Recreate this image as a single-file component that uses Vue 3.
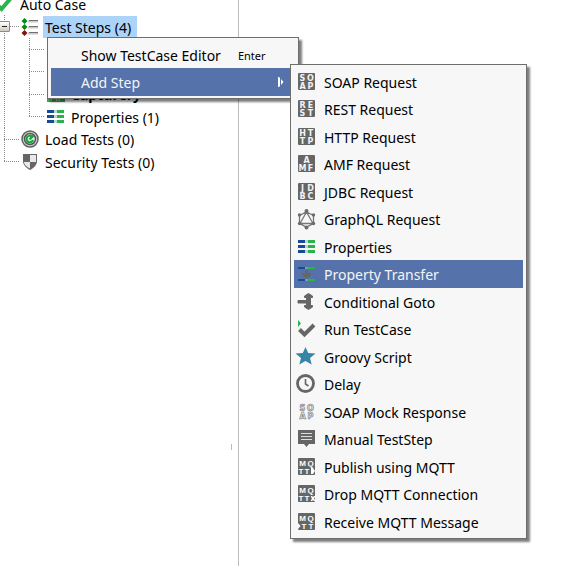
<script setup>
const tree = [
  { label: 'Auto Case', icon: 'check', level: 1, root: true },
  { label: 'Test Steps (4)', icon: 'steps', level: 1, selected: true, open: true },
  { level: 2 },
  { level: 2 },
  { label: 'Capturery', icon: 'run', level: 2, strong: true },
  { label: 'Properties (1)', icon: 'props', level: 2, last: true },
  { label: 'Load Tests (0)', icon: 'load', level: 1 },
  { label: 'Security Tests (0)', icon: 'shield', level: 1, last: true },
]

const steps = [
  { label: 'SOAP Request', tile: ['SO', 'AP'] },
  { label: 'REST Request', tile: ['RE', 'ST'] },
  { label: 'HTTP Request', tile: ['HT', 'TP'] },
  { label: 'AMF Request', tile: ['A', 'MF'] },
  { label: 'JDBC Request', tile: ['JD', 'BC'] },
  { label: 'GraphQL Request', icon: 'graph' },
  { label: 'Properties', icon: 'props' },
  { label: 'Property Transfer', icon: 'transfer', active: true },
  { label: 'Conditional Goto', icon: 'goto' },
  { label: 'Run TestCase', icon: 'runcase' },
  { label: 'Groovy Script', icon: 'star' },
  { label: 'Delay', icon: 'clock' },
  { label: 'SOAP Mock Response', tile: ['SO', 'AP'], light: true },
  { label: 'Manual TestStep', icon: 'manual' },
  { label: 'Publish using MQTT', tile: ['MQ', 'TT'], mark: 'M13 10h2l2 3-2 3h-2z' },
  { label: 'Drop MQTT Connection', tile: ['MQ', 'TT'], mark: 'M13 11h1l1 1 1-1h1v1l-1 1.500 1 1.500v1h-1l-1-1-1 1h-1v-1l1-1.500-1-1.500z' },
  { label: 'Receive MQTT Message', tile: ['MQ', 'TT'], mark: 'M0 10l2.500 3L0 16z', before: true },
]

function glyphX(step, row, r, i) {
  if (row.length === 1) return 8.5
  if (step.mark && r === 1) return (step.before ? 6 : 3) + i * (step.before ? 7 : 6)
  return 4.5 + i * 8
}
</script>

<template>
  <main class="page">
    <aside class="sidebar">
      <ul class="tree" role="tree">
        <li v-for="(n, k) in tree" :key="k" class="node" role="treeitem" :aria-selected="!!n.selected">
          <span v-if="!n.root" class="guide line" :class="{ branch: n.level === 1, end: n.last && n.level === 1 }">
            <button v-if="n.open" class="toggle" aria-label="Collapse"></button>
          </span>
          <span v-if="n.level === 2" class="guide inner line branch" :class="{ end: n.last }"></span>
          <svg v-if="n.icon === 'check'" class="icon root" viewBox="0 0 18 18">
            <path d="M0 8.500l5.500 5.500L15 3" fill="none" stroke="#2bb34b" stroke-width="4" />
          </svg>
          <svg v-else-if="n.icon === 'steps'" class="icon" viewBox="0 0 18 18">
            <path d="M7 3.500h10M7 9.500h10M7 15.500h10" stroke="#c9c9c9" stroke-width="2" />
            <path d="M8 2.500h9M8 8.500h9M8 14.500h9" stroke="#707070" />
            <path d="M3.500 0l3 3-3 3-3-3zM3.500 6l3 3-3 3-3-3z" fill="#078a14" />
            <path d="M3.500 12l3 3-3 3-3-3z" fill="#8a0f0f" />
          </svg>
          <svg v-else-if="n.icon === 'props'" class="icon" viewBox="0 0 18 18">
            <path d="M0 3.500h7M0 8.500h7M0 13.500h7" stroke="#184a9c" stroke-width="3" />
            <path d="M7 3.500h3M7 8.500h3M7 13.500h3" stroke="#b4dcc8" stroke-width="3" />
            <path d="M10 3.500h7M10 8.500h7M10 13.500h7" stroke="#2bb34b" stroke-width="3" />
          </svg>
          <svg v-else-if="n.icon === 'load'" class="icon" viewBox="0 0 18 18">
            <circle cx="9" cy="9" r="8" fill="#d0d0d0" stroke="#606060" stroke-width="1.500" />
            <circle cx="9" cy="9" r="5.500" fill="#dff3e4" stroke="#555" stroke-width="1.500" />
            <path d="M11 6.500A3.300 3.300 0 1 0 12 10M8.500 9.500L13 5" fill="none" stroke="#16a53c" stroke-width="2.200" />
          </svg>
          <svg v-else-if="n.icon === 'shield'" class="icon" viewBox="0 0 18 18">
            <path d="M2 1h14v7c0 4-3 7-7 9-4-2-7-5-7-9z" fill="#666" />
            <path d="M9 2h6v7H9zM3 9h6v6.500C6 14 3 12 3 9z" fill="#e8e8e8" />
          </svg>
          <svg v-else-if="n.icon === 'run'" class="icon" viewBox="0 0 18 18">
            <rect width="18" height="17" fill="#2bb34b" />
            <path d="M4 16l3-6 3 6M12 10v6M12 11h4" fill="none" stroke="#d9f2df" />
          </svg>
          <span v-if="n.label" class="label" :class="{ selected: n.selected, strong: n.strong }">{{ n.label }}</span>
        </li>
      </ul>
      <span class="grip"></span>
    </aside>

    <section class="content"></section>

    <ul class="menu context" role="menu">
      <li>
        <button class="item" role="menuitem">
          <span class="name">Show TestCase Editor</span><kbd class="key">Enter</kbd>
        </button>
      </li>
      <li>
        <button class="item active" role="menuitem" aria-haspopup="true" aria-expanded="true">
          <span class="name">Add Step</span>
          <svg class="arrow" viewBox="0 0 6 10"><path d="M0 0h1l1 1v8l-1 1H0zM3 2l2.500 3L3 8z" fill="#fff" /></svg>
        </button>
      </li>
    </ul>

    <ul class="menu submenu" role="menu" aria-label="Add Step">
      <li v-for="s in steps" :key="s.label">
        <button class="item" :class="{ active: s.active }" role="menuitem">
          <svg v-if="s.tile" class="icon" :class="{ light: s.light }" viewBox="0 0 18 18" aria-hidden="true">
            <rect class="tile" width="17" height="17" rx="1" />
            <template v-for="(row, r) in s.tile" :key="r">
              <text
                v-for="(c, i) in row"
                :key="i"
                class="glyph"
                :class="{ slim: s.mark }"
                :x="glyphX(s, row, r, i)"
                :y="8 + r * 8"
              >{{ c }}</text>
            </template>
            <path v-if="s.mark" :d="s.mark" fill="#fff" />
          </svg>
          <svg v-else-if="s.icon === 'graph'" class="icon" viewBox="0 0 18 18">
            <path d="M8.500 2L15.500 5.500v8L8.500 17l-7-3.500v-8zM8.500 2L2 13.500h13z" fill="none" stroke="#777" stroke-width="1.300" />
            <g fill="#6b6b6b">
              <circle cx="8.500" cy="1" r="2" /><circle cx="15.500" cy="5" r="1.700" /><circle cx="15.500" cy="13.500" r="1.700" />
              <circle cx="8.500" cy="17.500" r="2" /><circle cx="1.500" cy="13.500" r="1.700" /><circle cx="1.500" cy="5" r="1.700" />
            </g>
          </svg>
          <svg v-else-if="s.icon === 'props'" class="icon" viewBox="0 0 18 18">
            <path d="M0 3.500h7M0 8.500h7M0 13.500h7" stroke="#184a9c" stroke-width="3" />
            <path d="M7 3.500h3M7 8.500h3M7 13.500h3" stroke="#b4dcc8" stroke-width="3" />
            <path d="M10 3.500h7M10 8.500h7M10 13.500h7" stroke="#2bb34b" stroke-width="3" />
          </svg>
          <svg v-else-if="s.icon === 'transfer'" class="icon" viewBox="0 0 18 18">
            <path d="M0 3h7M0 15h7" stroke="#184a9c" stroke-width="2" />
            <path d="M7 3h3M7 15h3" stroke="#7c97b8" stroke-width="2" />
            <path d="M10 3h7M10 15h7" stroke="#2bb34b" stroke-width="2" />
            <path d="M7 5h3v3h3v2l-4.500 4L4 10V8h3z" fill="#666" />
          </svg>
          <svg v-else-if="s.icon === 'goto'" class="icon" viewBox="0 0 18 18">
            <path d="M0 7.500h8.500V4.500H6.500V3l4-2.500L14.500 3v1.500h-2v8h2V14l-4 2.500-4-2.500v-1.500h2V10H0z" fill="#666" stroke="#666" />
          </svg>
          <svg v-else-if="s.icon === 'runcase'" class="icon" viewBox="0 0 18 18">
            <path d="M1.500 9.500l5 5L16 5" fill="none" stroke="#666" stroke-width="4" />
            <path d="M0 0l3 3.500L0 7z" fill="#2bb34b" />
          </svg>
          <svg v-else-if="s.icon === 'star'" class="icon" viewBox="0 0 18 18">
            <path d="M7.500-1l2.700 6 7.300.500-5.500 4.500 1.700 6.500-6.200-3.500-6.200 3.500L3 10-2.500 5.500l7.300-.5z" fill="#3586a6" />
          </svg>
          <svg v-else-if="s.icon === 'clock'" class="icon" viewBox="0 0 18 18">
            <circle cx="7.500" cy="8.500" r="8" fill="#f7f7f7" stroke="#666" stroke-width="2.800" />
            <path d="M7.500 4v5l3 2" fill="none" stroke="#666" stroke-width="1.600" />
          </svg>
          <svg v-else class="icon" viewBox="0 0 18 18">
            <path d="M0 0h17v14h-6l-2.500 3L6 14H0z" fill="#666" />
            <path d="M3 3.500h11M3 6.500h11M3 9.500h11" stroke="#ddd" />
          </svg>
          <span class="name">{{ s.label }}</span>
        </button>
      </li>
    </ul>
  </main>
</template>

<style>
body {
  margin: 0;
  background: #fff;
}
</style>

<style scoped>
.page {
  position: relative;
  display: flex;
  min-height: 100vh;
  overflow: hidden;
  color: #000;
  font: 14px/20px "Noto Sans", "Open Sans", sans-serif;
}
.sidebar {
  display: flex;
  flex: none;
  box-sizing: border-box;
  width: 239px;
  border-right: 1px solid #bcbcbc;
}
.content {
  flex: 1;
}
.tree {
  display: grid;
  flex: 1;
  align-content: start;
  grid-auto-rows: 22px 23px;
  margin: -7px 0 0;
  padding: 0;
  list-style: none;
}
.grip {
  width: 1px;
  height: 6px;
  margin: 444px 6px 0 0;
  background: #bcbcbc;
}
.node {
  display: flex;
  align-items: center;
  white-space: nowrap;
}
.guide {
  display: flex;
  flex: none;
  align-self: stretch;
  align-items: center;
  width: 21px;
  --at: 4px;
}
.guide.inner {
  width: 26px;
  --at: 8px;
}
.line {
  background:
    repeating-linear-gradient(#8c8c8c 0 1px, transparent 1px 2px) var(--at) 0 / 1px 100% no-repeat;
}
.line.branch {
  background:
    repeating-linear-gradient(#8c8c8c 0 1px, transparent 1px 2px) var(--at) 0 / 1px 100% no-repeat,
    repeating-linear-gradient(90deg, #8c8c8c 0 1px, transparent 1px 2px) var(--at) 11px / 15px 1px no-repeat;
}
.line.branch.end {
  background:
    repeating-linear-gradient(#8c8c8c 0 1px, transparent 1px 2px) var(--at) 0 / 1px 11px no-repeat,
    repeating-linear-gradient(90deg, #8c8c8c 0 1px, transparent 1px 2px) var(--at) 11px / 15px 1px no-repeat;
}
.toggle {
  box-sizing: border-box;
  width: 11px;
  height: 11px;
  margin-left: -1px;
  padding: 0;
  border: 1px solid #8a8a8a;
  border-radius: 1px;
  background:
    linear-gradient(#222, #222) center / 5px 1px no-repeat,
    linear-gradient(#fff, #cfcac0);
}
.icon {
  flex: none;
  width: 18px;
  height: 18px;
  overflow: visible;
}
.icon.root {
  margin-left: -4px;
}
.label {
  margin-left: 4px;
  padding: 2px 2px 0;
}
.label.selected {
  padding: 2px 6px 0 2px;
  background: #acd3f8;
}
.label.strong {
  font-weight: 700;
}
.menu {
  position: absolute;
  display: grid;
  box-sizing: border-box;
  grid-auto-rows: 27px 28px;
  margin: 0;
  padding: 3px;
  border: 1px solid #6e6e6e;
  background: #f7f7f7;
  box-shadow: 3px 3px 2px rgba(0, 0, 0, 0.5);
  list-style: none;
}
.context {
  top: 37px;
  left: 47px;
  width: 252px;
  padding-bottom: 2px;
}
.submenu {
  top: 64px;
  left: 290px;
  width: 237px;
}
.item {
  display: flex;
  align-items: center;
  width: 100%;
  height: 100%;
  padding: 0 4px;
  border: 0;
  background: none;
  color: inherit;
  font: inherit;
  text-align: left;
  white-space: nowrap;
}
.item.active {
  background: #5572ab;
  color: #f4f4f4;
}
.context .item {
  padding: 0 11px 0 30px;
}
.name {
  padding-top: 2px;
}
.submenu .name {
  margin-left: 8px;
}
.key {
  margin-left: 17px;
  padding-top: 2px;
  font: 11px/20px "Noto Sans", "Open Sans", sans-serif;
}
.arrow {
  width: 6px;
  height: 10px;
  margin-left: auto;
}
.tile {
  fill: #666;
}
.glyph {
  fill: #f2f2f2;
  font: 700 8px "DejaVu Sans", sans-serif;
  text-anchor: middle;
}
.glyph.slim {
  fill: #fff;
  font: 700 8px "Liberation Sans", sans-serif;
}
.light .tile {
  fill: none;
}
.light .glyph {
  fill: none;
  stroke: #7c7c7c;
  stroke-width: 0.7px;
}
</style>
